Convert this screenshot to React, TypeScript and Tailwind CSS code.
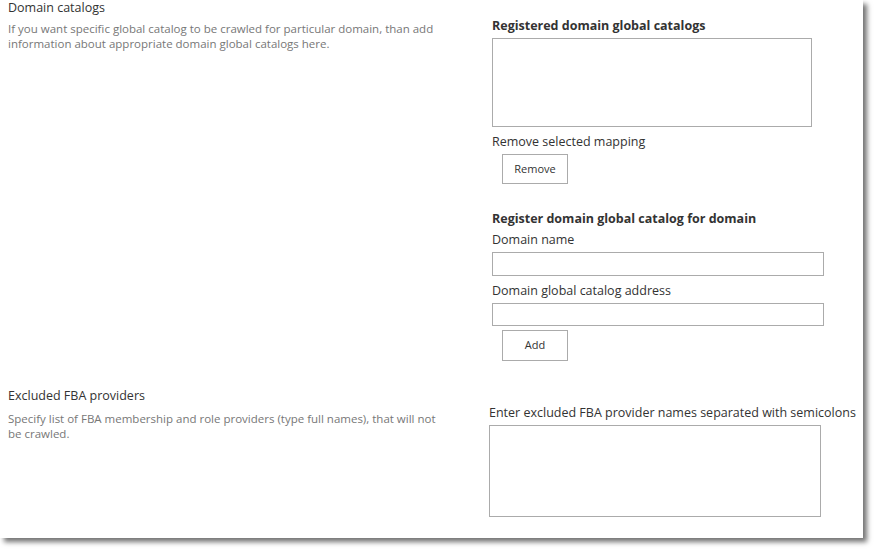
export default function App() {
  return (
    <div className="w-[877px] h-[551px] bg-white" style={{ fontFamily: '"Open Sans", "Noto Sans", sans-serif' }}>
      <div className="w-[863px] h-[538px] bg-white shadow-[4px_4px_5px_rgba(0,0,0,0.55)] relative">
        {/* Domain catalogs */}
        <div className="flex h-[380px]">
          <div className="w-[484px] pl-[8px] pt-[0px]">
            <div className="text-[12.5px] text-[#333] leading-[16px]">Domain catalogs</div>
            <p className="mt-[5px] text-[11.5px] leading-[15px] text-[#777] w-[430px]">
              If you want specific global catalog to be crawled for particular domain, than add information about appropriate domain global catalogs here.
            </p>
          </div>
          <div className="pl-[8px] pt-[17px] text-[12.5px] text-[#333]">
            <div className="font-bold leading-[18px]">Registered domain global catalogs</div>
            <div className="mt-[3px] w-[320px] h-[89px] border border-[#ababab]" />
            <div className="mt-[6px] leading-[18px]">Remove selected mapping</div>
            <button className="ml-[10px] mt-[3px] w-[66px] h-[30px] border border-[#ababab] bg-white text-[11px] text-[#333]">Remove</button>
            <div className="mt-[26px] font-bold leading-[18px]">Register domain global catalog for domain</div>
            <div className="mt-[3px] leading-[18px]">Domain name</div>
            <div className="mt-[3px] w-[332px] h-[24px] border border-[#ababab]" />
            <div className="mt-[6px] leading-[18px]">Domain global catalog address</div>
            <div className="mt-[3px] w-[332px] h-[23px] border border-[#ababab]" />
            <button className="ml-[10px] mt-[4px] w-[66px] h-[31px] border border-[#ababab] bg-white text-[11px] text-[#333]">Add</button>
          </div>
        </div>
        {/* Excluded FBA providers */}
        <div className="flex">
          <div className="w-[481px] pl-[8px] pt-[8px]">
            <div className="text-[12.5px] text-[#333] leading-[16px]">Excluded FBA providers</div>
            <p className="mt-[7px] text-[11.5px] leading-[15px] text-[#777] w-[440px]">
              Specify list of FBA membership and role providers (type full names), that will not be crawled.
            </p>
          </div>
          <div className="pl-[8px] pt-[24px] text-[12.5px] text-[#333]">
            <div className="leading-[18px]">Enter excluded FBA provider names separated with semicolons</div>
            <div className="mt-[3px] w-[332px] h-[92px] border border-[#ababab]" />
          </div>
        </div>
      </div>
    </div>
  );
}
